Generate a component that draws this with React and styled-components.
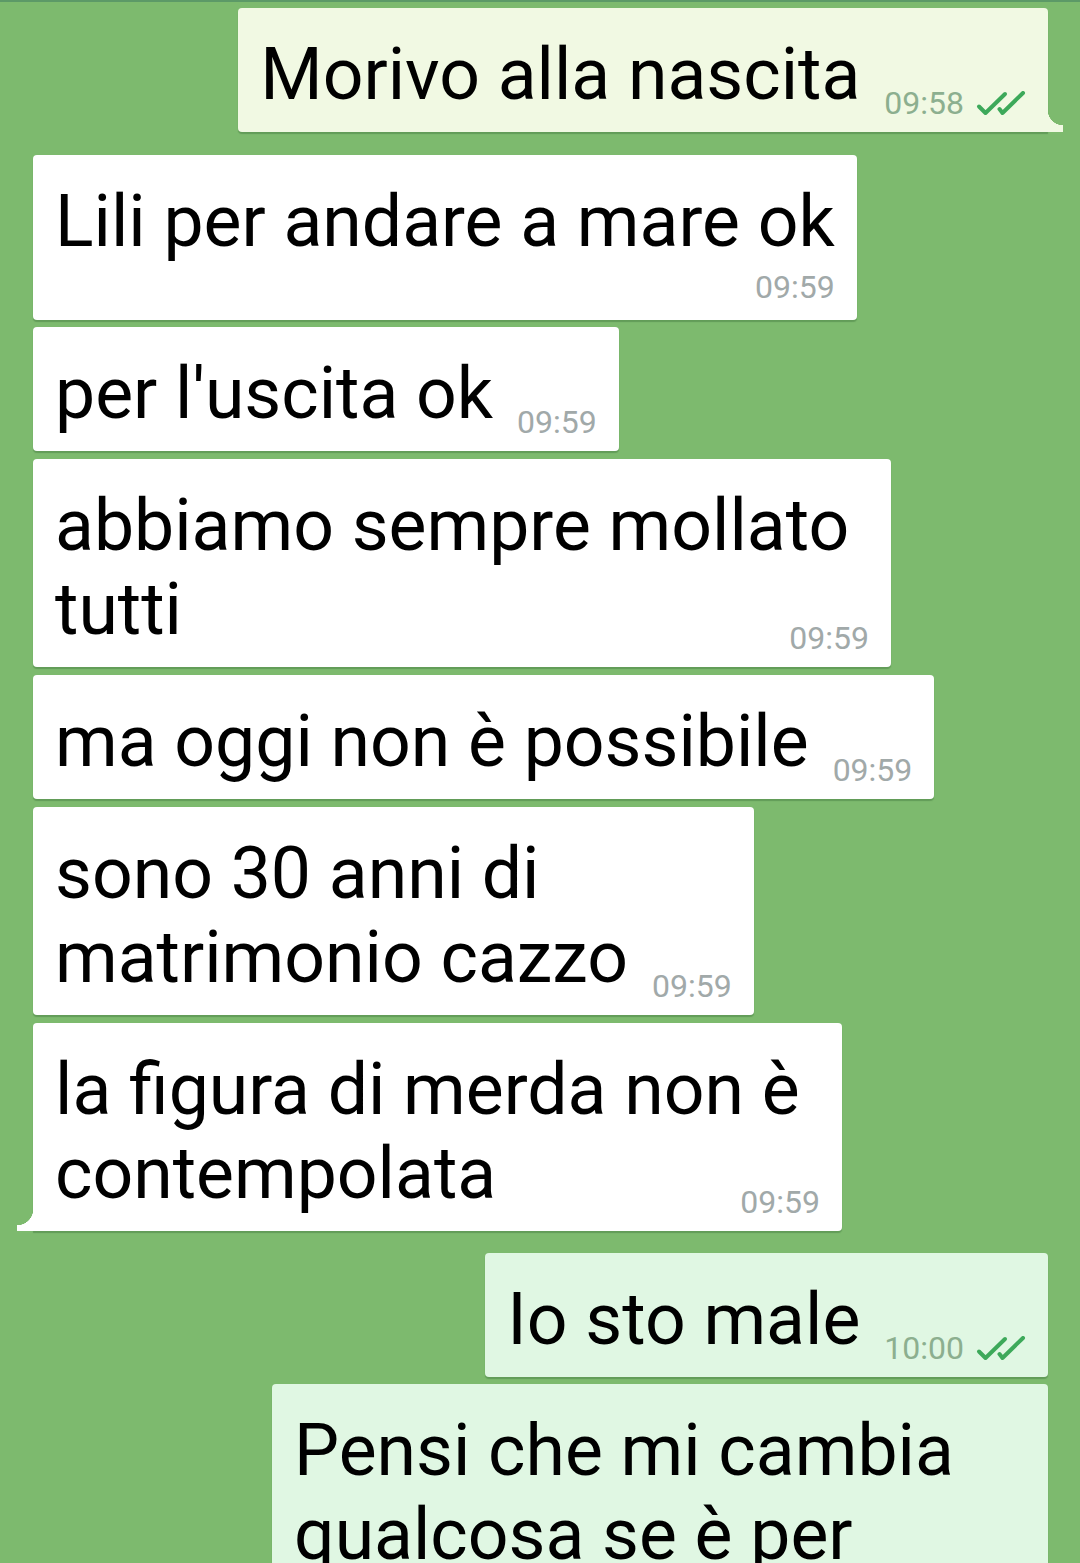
import React from "react";
import styled, { createGlobalStyle, css } from "styled-components";

const GlobalStyle = createGlobalStyle`
  html, body {
    margin: 0;
    padding: 0;
  }
  body {
    background: #7dba6e;
    font-family: Roboto, "Noto Sans", sans-serif;
    overflow: hidden;
  }
`;

const Chat = styled.div`
  display: flex;
  flex-direction: column;
  height: 1563px;
  box-sizing: border-box;
  padding: 6px 32px 0 33px;
  border-top: 2px solid #5c9967;
  overflow: hidden;
`;

const tailRight = css`
  border-bottom-right-radius: 0;
  &::after {
    content: "";
    position: absolute;
    right: -15px;
    bottom: 0;
    width: 15px;
    height: 22px;
    background: radial-gradient(circle at 100% 0, transparent 15px, ${(p) => p.$bg} 15.5px);
  }
`;

const tailLeft = css`
  border-bottom-left-radius: 0;
  &::after {
    content: "";
    position: absolute;
    left: -16px;
    bottom: 0;
    width: 16px;
    height: 22px;
    background: radial-gradient(circle at 0 0, transparent 16px, ${(p) => p.$bg} 16.5px);
  }
`;

const Bubble = styled.div`
  position: relative;
  box-sizing: border-box;
  align-self: ${(p) => (p.$out ? "flex-end" : "flex-start")};
  width: ${(p) => (p.$w ? `${p.$w}px` : "auto")};
  margin-top: ${(p) => p.$gap}px;
  padding: 25px 22px 15px;
  background: ${(p) => p.$bg};
  border-radius: 4px;
  box-shadow: 0 2px 1px rgba(50, 100, 50, 0.35);
  font-size: 71.5px;
  line-height: 84px;
  color: #000;
  white-space: nowrap;
  ${(p) => p.$tail === "right" && tailRight}
  ${(p) => p.$tail === "left" && tailLeft}
`;

const Line = styled.div``;

const LastLine = styled.div`
  display: flex;
  justify-content: space-between;
  align-items: flex-end;
`;

const Meta = styled.span`
  display: inline-flex;
  align-items: flex-end;
  gap: 12px;
  margin-left: ${(p) => (p.$block ? 0 : 24)}px;
  font-size: 32px;
  line-height: 27px;
  color: ${(p) => (p.$out ? "#8caf8f" : "#a1a9a9")};
`;

const MetaRow = styled.div`
  display: flex;
  justify-content: flex-end;
  margin: 10px 0 4px;
`;

const Ticks = () => (
  <svg width="50" height="26" viewBox="0 0 50 26" fill="none">
    <path d="M3 15.5 L9.5 22 L29 3" stroke="#3da95a" strokeWidth="4" strokeLinecap="round" strokeLinejoin="round" />
    <path d="M23.5 18 L26.5 22 L47 2" stroke="#3da95a" strokeWidth="4" strokeLinecap="round" strokeLinejoin="round" />
  </svg>
);

const OUT_A = "#f1f9e3";
const OUT_B = "#e0f7e3";
const IN = "#ffffff";

const messages = [
  { out: true, bg: OUT_A, gap: 0, lines: ["Morivo alla nascita"], time: "09:58", tail: "right" },
  { bg: IN, gap: 23, lines: ["Lili per andare a mare ok"], time: "09:59", below: true },
  { bg: IN, gap: 7, lines: ["per l'uscita ok"], time: "09:59" },
  { bg: IN, gap: 8, w: 858, lines: ["abbiamo sempre mollato", "tutti"], time: "09:59" },
  { bg: IN, gap: 8, lines: ["ma oggi non è possibile"], time: "09:59" },
  { bg: IN, gap: 8, lines: ["sono 30 anni di", "matrimonio cazzo"], time: "09:59" },
  { bg: IN, gap: 8, w: 809, lines: ["la figura di merda non è", "contempolata"], time: "09:59", tail: "left" },
  { out: true, bg: OUT_B, gap: 22, lines: ["Io sto male"], time: "10:00" },
  { out: true, bg: OUT_B, gap: 7, w: 776, lines: ["Pensi che mi cambia", "qualcosa se è per"], time: "10:00", below: true },
];

const Message = ({ m }) => {
  const head = m.lines.slice(0, -1);
  const last = m.lines[m.lines.length - 1];
  const meta = (
    <Meta $out={m.out} $block={m.below}>
      {m.time}
      {m.out && <Ticks />}
    </Meta>
  );
  return (
    <Bubble $out={m.out} $bg={m.bg} $gap={m.gap} $tail={m.tail} $w={m.w}>
      {head.map((l) => (
        <Line key={l}>{l}</Line>
      ))}
      {m.below ? (
        <>
          <Line>{last}</Line>
          <MetaRow>{meta}</MetaRow>
        </>
      ) : (
        <LastLine>
          <span>{last}</span>
          {meta}
        </LastLine>
      )}
    </Bubble>
  );
};

export default function App() {
  return (
    <>
      <GlobalStyle />
      <Chat>
        {messages.map((m, i) => (
          <Message key={i} m={m} />
        ))}
      </Chat>
    </>
  );
}
